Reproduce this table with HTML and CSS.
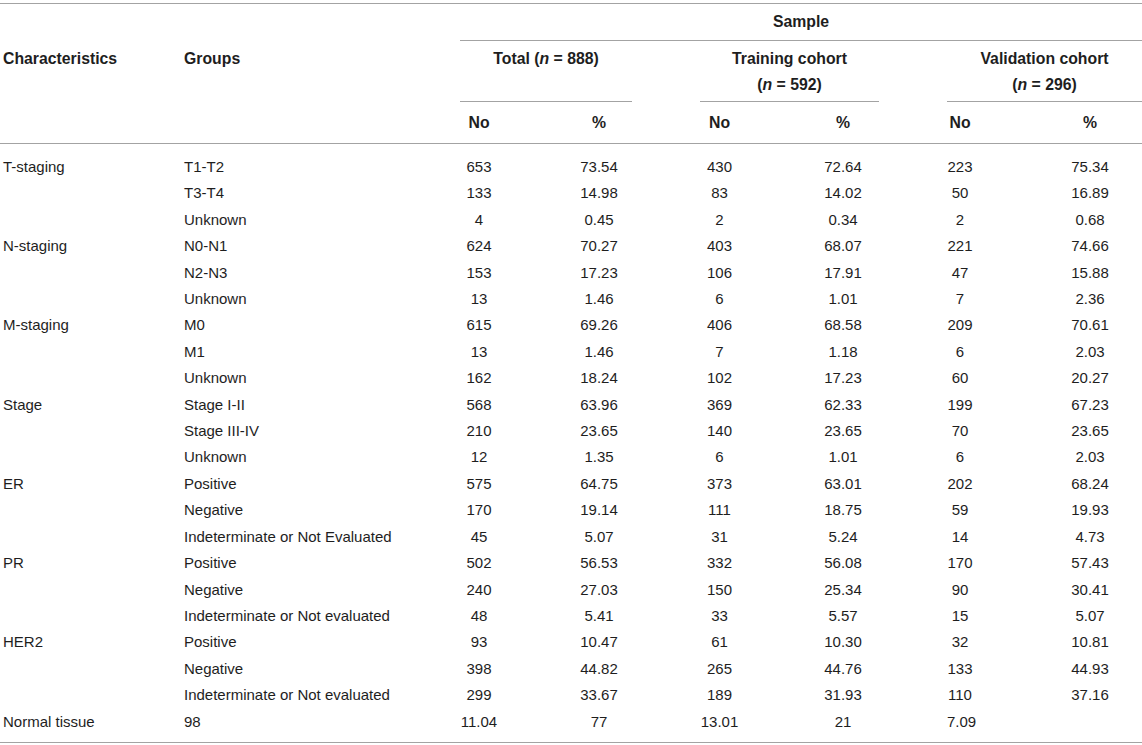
FILE: index.html
```html
<!DOCTYPE html>
<html lang="en">
<head>
<meta charset="utf-8">
<title>Sample characteristics</title>
<link rel="stylesheet" href="styles.css">
</head>
<body>
<table class="tbl">
  <colgroup>
    <col class="w-char"><col class="w-group">
    <col class="w-tno"><col class="w-tpct">
    <col class="w-rno"><col class="w-rpct">
    <col class="w-vno"><col class="w-vpct">
  </colgroup>
  <thead>
    <tr class="h1">
      <th></th><th></th>
      <th colspan="6" class="sample">Sample</th>
    </tr>
    <tr class="h2">
      <th rowspan="2" class="lab">Characteristics</th>
      <th rowspan="2" class="lab">Groups</th>
      <th colspan="2" class="grp"><div class="grp-in gap">Total (<i>n</i> = 888)</div></th>
      <th colspan="2" class="grp"><div class="grp-in gap">Training cohort<br>(<i>n</i> = 592)</div></th>
      <th colspan="2" class="grp"><div class="grp-in">Validation cohort<br>(<i>n</i> = 296)</div></th>
    </tr>
    <tr class="h3">
      <th>No</th><th>%</th>
      <th>No</th><th>%</th>
      <th class="vno">No</th><th class="vpct">%</th>
    </tr>
  </thead>
  <tbody>
    <tr><td class="txt">T-staging</td><td class="txt">T1-T2</td><td>653</td><td>73.54</td><td>430</td><td>72.64</td><td class="vno">223</td><td class="vpct">75.34</td></tr>
    <tr><td class="txt"></td><td class="txt">T3-T4</td><td>133</td><td>14.98</td><td>83</td><td>14.02</td><td class="vno">50</td><td class="vpct">16.89</td></tr>
    <tr><td class="txt"></td><td class="txt">Unknown</td><td>4</td><td>0.45</td><td>2</td><td>0.34</td><td class="vno">2</td><td class="vpct">0.68</td></tr>
    <tr><td class="txt">N-staging</td><td class="txt">N0-N1</td><td>624</td><td>70.27</td><td>403</td><td>68.07</td><td class="vno">221</td><td class="vpct">74.66</td></tr>
    <tr><td class="txt"></td><td class="txt">N2-N3</td><td>153</td><td>17.23</td><td>106</td><td>17.91</td><td class="vno">47</td><td class="vpct">15.88</td></tr>
    <tr><td class="txt"></td><td class="txt">Unknown</td><td>13</td><td>1.46</td><td>6</td><td>1.01</td><td class="vno">7</td><td class="vpct">2.36</td></tr>
    <tr><td class="txt">M-staging</td><td class="txt">M0</td><td>615</td><td>69.26</td><td>406</td><td>68.58</td><td class="vno">209</td><td class="vpct">70.61</td></tr>
    <tr><td class="txt"></td><td class="txt">M1</td><td>13</td><td>1.46</td><td>7</td><td>1.18</td><td class="vno">6</td><td class="vpct">2.03</td></tr>
    <tr><td class="txt"></td><td class="txt">Unknown</td><td>162</td><td>18.24</td><td>102</td><td>17.23</td><td class="vno">60</td><td class="vpct">20.27</td></tr>
    <tr><td class="txt">Stage</td><td class="txt">Stage I-II</td><td>568</td><td>63.96</td><td>369</td><td>62.33</td><td class="vno">199</td><td class="vpct">67.23</td></tr>
    <tr><td class="txt"></td><td class="txt">Stage III-IV</td><td>210</td><td>23.65</td><td>140</td><td>23.65</td><td class="vno">70</td><td class="vpct">23.65</td></tr>
    <tr><td class="txt"></td><td class="txt">Unknown</td><td>12</td><td>1.35</td><td>6</td><td>1.01</td><td class="vno">6</td><td class="vpct">2.03</td></tr>
    <tr><td class="txt">ER</td><td class="txt">Positive</td><td>575</td><td>64.75</td><td>373</td><td>63.01</td><td class="vno">202</td><td class="vpct">68.24</td></tr>
    <tr><td class="txt"></td><td class="txt">Negative</td><td>170</td><td>19.14</td><td>111</td><td>18.75</td><td class="vno">59</td><td class="vpct">19.93</td></tr>
    <tr><td class="txt"></td><td class="txt">Indeterminate or Not Evaluated</td><td>45</td><td>5.07</td><td>31</td><td>5.24</td><td class="vno">14</td><td class="vpct">4.73</td></tr>
    <tr><td class="txt">PR</td><td class="txt">Positive</td><td>502</td><td>56.53</td><td>332</td><td>56.08</td><td class="vno">170</td><td class="vpct">57.43</td></tr>
    <tr><td class="txt"></td><td class="txt">Negative</td><td>240</td><td>27.03</td><td>150</td><td>25.34</td><td class="vno">90</td><td class="vpct">30.41</td></tr>
    <tr><td class="txt"></td><td class="txt">Indeterminate or Not evaluated</td><td>48</td><td>5.41</td><td>33</td><td>5.57</td><td class="vno">15</td><td class="vpct">5.07</td></tr>
    <tr><td class="txt">HER2</td><td class="txt">Positive</td><td>93</td><td>10.47</td><td>61</td><td>10.30</td><td class="vno">32</td><td class="vpct">10.81</td></tr>
    <tr><td class="txt"></td><td class="txt">Negative</td><td>398</td><td>44.82</td><td>265</td><td>44.76</td><td class="vno">133</td><td class="vpct">44.93</td></tr>
    <tr><td class="txt"></td><td class="txt">Indeterminate or Not evaluated</td><td>299</td><td>33.67</td><td>189</td><td>31.93</td><td class="vno">110</td><td class="vpct">37.16</td></tr>
    <tr><td class="txt">Normal tissue</td><td class="txt">98</td><td>11.04</td><td>77</td><td>13.01</td><td>21</td><td class="vno">7.09</td><td class="vpct"></td></tr>
  </tbody>
</table>
</body>
</html>
```

FILE: styles.css
```css
html, body {
  margin: 0;
  padding: 0;
  background: #ffffff;
}

body {
  font-family: "Liberation Sans", Arial, sans-serif;
  font-size: 15px;
  color: #1e1e1e;
}

.tbl {
  width: 1142px;
  margin-top: 3px;
  table-layout: fixed;
  border-collapse: separate;
  border-spacing: 0;
  border-top: 1px solid #a3a3a3;
  border-bottom: 1px solid #a3a3a3;
}

.w-char { width: 181px; }
.w-group { width: 279px; }
.w-tno { width: 38px; }
.w-tpct { width: 202px; }
.w-rno { width: 39px; }
.w-rpct { width: 208px; }
.w-vno { width: 53px; }
.w-vpct { width: 142px; }

th, td {
  padding: 0;
  line-height: 26px;
  text-align: center;
  white-space: nowrap;
  font-weight: normal;
}

thead th {
  font-weight: bold;
  font-size: 15.8px;
}

.h1 th {
  padding: 5px 0 5px;
}

.sample {
  border-bottom: 1px solid #a3a3a3;
}

.h2 th {
  vertical-align: top;
}

.lab {
  text-align: left;
  padding: 5px 0 0 3px !important;
  border-bottom: 1px solid #a3a3a3;
}

.grp-in {
  height: 52px;
  padding: 5px 0 3px;
  border-bottom: 1px solid #a3a3a3;
  text-align: center;
}

.grp-in.gap {
  margin-right: 68px;
}

.h3 th {
  padding: 8px 0 7px;
  border-bottom: 1px solid #a3a3a3;
}

tbody td {
  line-height: 26.4px;
}

tbody tr:first-child td {
  padding-top: 10px;
}

tbody tr:last-child td {
  padding-bottom: 7px;
}

td.txt {
  text-align: left;
  padding-left: 3px;
}

.h3 th.vno,
td.vno {
  padding-right: 27px;
}

.h3 th.vpct,
td.vpct {
  padding-left: 38px;
}
```
